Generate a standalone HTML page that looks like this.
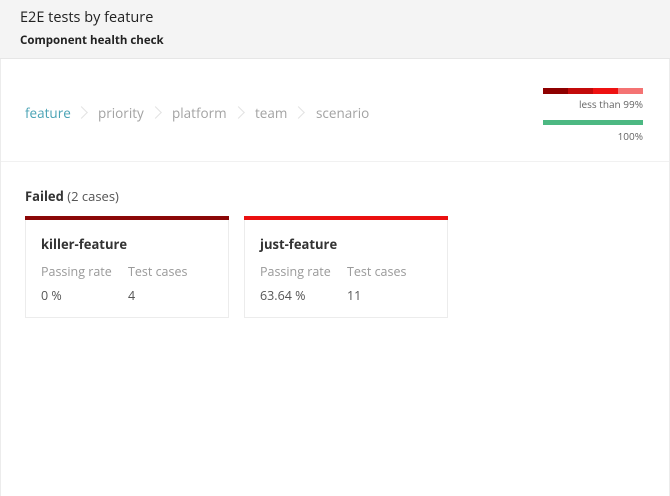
<!DOCTYPE html>
<html><head><meta charset="utf-8"><style>
body{margin:0;width:670px;height:496px;background:#fff;font-family:"Open Sans","DejaVu Sans","Liberation Sans",sans-serif;overflow:hidden;position:relative;color:#333}
.hdr{position:absolute;left:0;top:0;width:670px;height:58px;background:#f4f4f4;border-bottom:1px solid #e6e6e6}
.t1{position:absolute;left:20px;top:8px;font-size:14.5px;color:#222}
.t2{position:absolute;left:20px;top:33px;font-size:11.5px;font-weight:bold;color:#222}
.frame{position:absolute;left:0;top:59px;width:668px;height:437px;border-left:1px solid #ececec;border-right:1px solid #ececec}
.div{position:absolute;left:1px;top:161px;width:668px;height:1px;background:#f1f1f1}
.bc{position:absolute;top:104px;font-size:13.5px;color:#a3a3a3}
.chev{position:absolute;top:108px;width:8px;height:8px;border-top:1px solid #e3e3e3;border-right:1px solid #e3e3e3;transform:rotate(45deg)}
.lg{position:absolute;font-size:10px;color:#666;right:27px}
.card{position:absolute;top:216px;width:202px;height:101px;border:1px solid #ececec;border-top:none}
.bar{position:absolute;left:-1px;top:0;width:204px;height:4px}
.cn{position:absolute;left:15px;top:19px;font-size:13px;font-weight:bold;color:#333}
.cl{position:absolute;top:47px;font-size:12.5px;color:#9a9a9a}
.cv{position:absolute;top:71px;font-size:12.5px;color:#555}
</style></head><body>
<div class="hdr"><div class="t1">E2E tests by feature</div><div class="t2">Component health check</div></div>
<div class="frame"></div>
<div class="div"></div>
<div class="bc" style="left:25px;color:#4aa3b5">feature</div>
<div class="chev" style="left:77px"></div>
<div class="bc" style="left:98px">priority</div>
<div class="chev" style="left:151px"></div>
<div class="bc" style="left:172px">platform</div>
<div class="chev" style="left:234px"></div>
<div class="bc" style="left:255px">team</div>
<div class="chev" style="left:294px"></div>
<div class="bc" style="left:316px">scenario</div>
<div style="position:absolute;left:543px;top:88px;width:100px;height:6px;display:flex">
<div style="flex:1;background:#8e0000"></div><div style="flex:1;background:#c30a0a"></div><div style="flex:1;background:#ee1111"></div><div style="flex:1;background:#f47373"></div></div>
<div class="lg" style="top:97px">less than 99%</div>
<div style="position:absolute;left:543px;top:120px;width:100px;height:5px;background:#4cb882"></div>
<div class="lg" style="top:129px">100%</div>
<div style="position:absolute;left:25px;top:187px;font-size:13px;color:#333"><b>Failed</b> <span style="color:#555">(2 cases)</span></div>
<div class="card" style="left:25px"><div class="bar" style="background:#8b0707"></div>
<div class="cn">killer-feature</div><div class="cl" style="left:15px">Passing rate</div><div class="cl" style="left:102px">Test cases</div>
<div class="cv" style="left:15px">0 %</div><div class="cv" style="left:102px">4</div></div>
<div class="card" style="left:244px"><div class="bar" style="background:#ea1010"></div>
<div class="cn">just-feature</div><div class="cl" style="left:15px">Passing rate</div><div class="cl" style="left:102px">Test cases</div>
<div class="cv" style="left:15px">63.64 %</div><div class="cv" style="left:102px">11</div></div>
</body></html>
